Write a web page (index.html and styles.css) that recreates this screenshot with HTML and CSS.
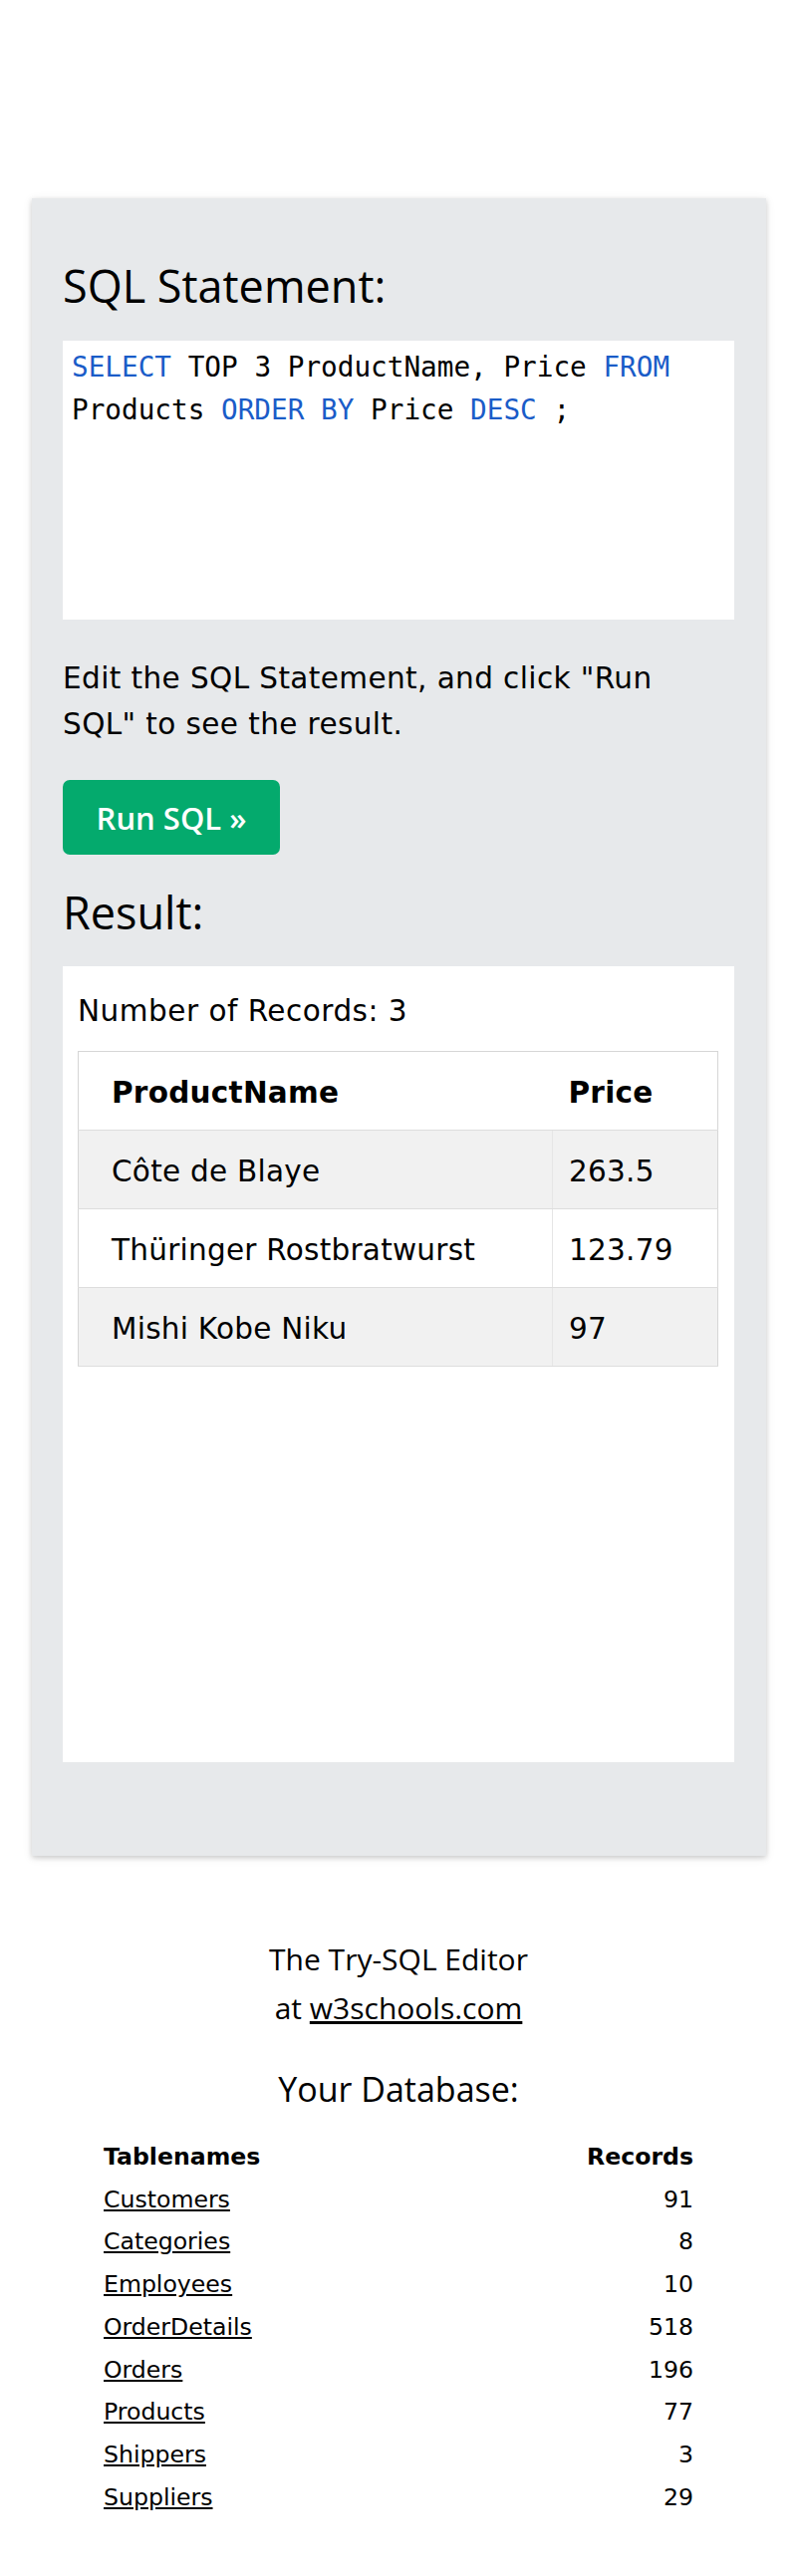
FILE: index.html
```html
<!DOCTYPE html>
<html lang="en">
<head>
<meta charset="utf-8">
<title>SQL Tryit Editor</title>
<link rel="stylesheet" href="styles.css">
</head>
<body>
<main class="panel">
  <h2 class="heading heading-first">SQL Statement:</h2>
  <div class="code"><span class="kw">SELECT</span> TOP 3 ProductName, Price <span class="kw">FROM</span><br>Products <span class="kw">ORDER BY</span> Price <span class="kw">DESC</span> ;</div>
  <p class="hint">Edit the SQL Statement, and click "Run<br>SQL" to see the result.</p>
  <button class="run" type="button">Run SQL »</button>
  <h2 class="heading heading-result">Result:</h2>
  <div class="result">
    <div class="count">Number of Records: 3</div>
    <table class="rtable">
      <colgroup><col class="c1"><col></colgroup>
      <tr><th>ProductName</th><th>Price</th></tr>
      <tr><td>Côte de Blaye</td><td>263.5</td></tr>
      <tr><td>Thüringer Rostbratwurst</td><td>123.79</td></tr>
      <tr><td>Mishi Kobe Niku</td><td>97</td></tr>
    </table>
  </div>
</main>
<footer class="footer">
  <div class="editor">The Try-SQL Editor<br>at <a href="#">w3schools.com</a></div>
  <div class="dbtitle">Your Database:</div>
  <table class="dbtable">
    <tr><th class="tn">Tablenames</th><th class="rc">Records</th></tr>
    <tr><td class="tn"><a href="#">Customers</a></td><td class="rc">91</td></tr>
    <tr><td class="tn"><a href="#">Categories</a></td><td class="rc">8</td></tr>
    <tr><td class="tn"><a href="#">Employees</a></td><td class="rc">10</td></tr>
    <tr><td class="tn"><a href="#">OrderDetails</a></td><td class="rc">518</td></tr>
    <tr><td class="tn"><a href="#">Orders</a></td><td class="rc">196</td></tr>
    <tr><td class="tn"><a href="#">Products</a></td><td class="rc">77</td></tr>
    <tr><td class="tn"><a href="#">Shippers</a></td><td class="rc">3</td></tr>
    <tr><td class="tn"><a href="#">Suppliers</a></td><td class="rc">29</td></tr>
  </table>
</footer>
</body>
</html>
```
FILE: styles.css
```css
html, body {
  margin: 0;
  padding: 0;
  background: #ffffff;
  color: #000000;
  font-family: "DejaVu Sans", Verdana, sans-serif;
}

.panel {
  display: block;
  margin: 199px 31px 0 32px;
  padding: 58px 32px 94px 31px;
  background: #e7e9eb;
  box-shadow: 0 2px 5px 0 rgba(0, 0, 0, 0.16), 0 2px 10px 0 rgba(0, 0, 0, 0.08);
}

.heading {
  margin: 0;
  font-family: "Open Sans", "Noto Sans", sans-serif;
  font-weight: 400;
  font-size: 45px;
  line-height: 60px;
  color: #000;
}

.code {
  margin-top: 25px;
  height: 280px;
  box-sizing: border-box;
  padding: 5px 9px;
  background: #ffffff;
  font-family: "DejaVu Sans Mono", "Liberation Mono", monospace;
  font-size: 27.7px;
  line-height: 43px;
  color: #000;
  white-space: nowrap;
}

.kw {
  color: #1a5cc8;
}

.hint {
  margin: 36px 0 0 0;
  font-size: 29.5px;
  line-height: 46px;
  letter-spacing: 0.4px;
}

.run {
  display: block;
  margin-top: 33px;
  width: 218px;
  height: 75px;
  border: none;
  border-radius: 7px;
  background: #04aa6d;
  color: #ffffff;
  font-family: "Open Sans", "Noto Sans", sans-serif;
  font-weight: 600;
  font-size: 31px;
  padding: 0;
  cursor: pointer;
}

.heading-result {
  margin-top: 28px;
}

.result {
  margin-top: 24px;
  height: 799px;
  box-sizing: border-box;
  padding: 22px 16px 16px 15px;
  background: #ffffff;
}

.count {
  font-size: 29.5px;
  line-height: 46px;
  letter-spacing: 0.5px;
}

.rtable {
  margin-top: 17px;
  width: 643px;
  border-collapse: collapse;
  table-layout: fixed;
  border: 1px solid #d6d6d6;
  font-size: 29.5px;
  line-height: 46px;
  letter-spacing: 0.25px;
}

.rtable col.c1 {
  width: 476px;
}

.rtable th,
.rtable td {
  text-align: left;
  padding: 18px 8px 14px 16px;
  border-bottom: 1px solid #dddddd;
  white-space: nowrap;
}

.rtable th {
  font-weight: bold;
  background: #ffffff;
}

.rtable th:first-child,
.rtable td:first-child {
  padding-left: 33px;
}

.rtable td + td {
  border-left: 1px solid #e6e6e6;
}

.rtable tr:nth-child(even) td {
  background: #f1f1f1;
}

.rtable tr:nth-child(odd) td {
  background: #ffffff;
}

.footer {
  padding-top: 79px;
  padding-bottom: 40px;
  text-align: center;
}

.editor {
  font-family: "Open Sans", "Noto Sans", sans-serif;
  font-size: 30px;
  line-height: 49px;
}

.editor a {
  color: #000;
  text-decoration: underline;
}

.dbtitle {
  margin-top: 34px;
  font-family: "Open Sans", "Noto Sans", sans-serif;
  font-size: 34px;
  line-height: 46px;
}

.dbtable {
  margin: 24px auto 0 auto;
  width: 592px;
  border-collapse: collapse;
  font-size: 23.6px;
  line-height: 42.7px;
}

.dbtable th,
.dbtable td {
  padding: 0;
}

.dbtable th {
  font-weight: bold;
}

.dbtable .tn {
  text-align: left;
}

.dbtable .rc {
  text-align: right;
}

.dbtable a {
  color: #000;
  text-decoration: underline;
}
```
